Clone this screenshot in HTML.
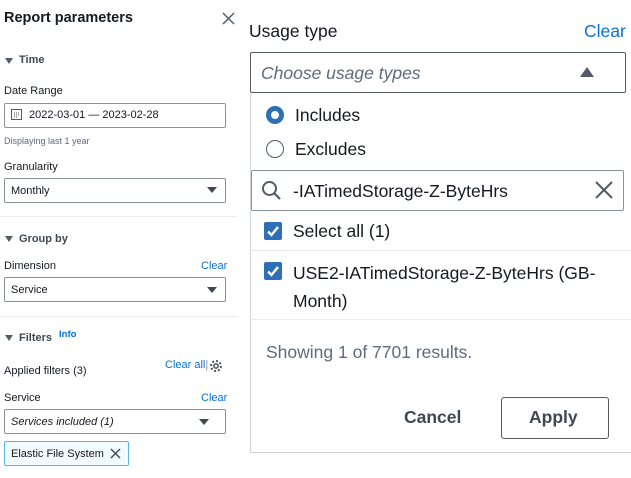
<!DOCTYPE html>
<html><head><style>
*{box-sizing:border-box;margin:0;padding:0}
body{width:631px;height:478px;overflow:hidden;background:#fff;font-family:"Liberation Sans",sans-serif;color:#16191f;position:relative}
.a{position:absolute;white-space:nowrap}
.s{font-size:11px}
.lbl{font-size:11px;color:#16191f}
.blue{color:#0972d3}
.box{position:absolute;border:1px solid #8d9199;border-radius:2px;background:#fff}
.tri{position:absolute;width:0;height:0;border-left:5px solid transparent;border-right:5px solid transparent;border-top:6px solid #414750}
.ttri{position:absolute;width:0;height:0;border-left:4px solid transparent;border-right:4px solid transparent;border-top:6px solid #545b64}
.hr{position:absolute;height:1px;background:#e9ebed}
.cb{position:absolute;width:18px;height:18px;background:#2f6fb6;border-radius:2px}
.R{font-size:17.5px}
</style></head><body>
<div class="a" style="left:4px;top:10px;font-size:14.5px;font-weight:bold">Report parameters</div>
<svg class="a" style="left:222px;top:12px" width="13" height="13"><path d="M1 1L12 12M12 1L1 12" stroke="#545b64" stroke-width="1.5"/></svg>

<div class="ttri" style="left:5px;top:58px"></div>
<div class="a s" style="left:19px;top:54px;font-weight:bold;color:#414750">Time</div>
<div class="a lbl" style="left:4px;top:85px">Date Range</div>
<div class="box" style="left:4px;top:103px;width:222px;height:25px"></div>
<svg class="a" style="left:11px;top:109px" width="11" height="11"><rect x=".5" y=".5" width="10" height="10" fill="none" stroke="#545b64"/><path d="M3 4h1M5 4h1M7 4h1M3 6h1M5 6h1M7 6h1M3 8h1M5 8h1" stroke="#545b64"/></svg>
<div class="a s" style="left:29px;top:109px">2022-03-01 — 2023-02-28</div>
<div class="a" style="left:4px;top:136px;font-size:9px;color:#5f6b7a">Displaying last 1 year</div>
<div class="a lbl" style="left:4px;top:161px">Granularity</div>
<div class="box" style="left:4px;top:178px;width:222px;height:25px"></div>
<div class="a s" style="left:11px;top:185px">Monthly</div>
<div class="tri" style="left:207px;top:187px"></div>
<div class="hr" style="left:0;top:216px;width:237px"></div>

<div class="ttri" style="left:5px;top:236px"></div>
<div class="a s" style="left:19px;top:233px;font-weight:bold;color:#414750">Group by</div>
<div class="a lbl" style="left:4px;top:260px">Dimension</div>
<div class="a s blue" style="left:201px;top:260px">Clear</div>
<div class="box" style="left:4px;top:277px;width:222px;height:25px"></div>
<div class="a s" style="left:11px;top:284px">Service</div>
<div class="tri" style="left:207px;top:287px"></div>
<div class="hr" style="left:0;top:316px;width:237px"></div>

<div class="ttri" style="left:5px;top:335px"></div>
<div class="a s" style="left:19px;top:332px;font-weight:bold;color:#414750">Filters</div>
<div class="a blue" style="left:59px;top:329px;font-size:9.5px;font-weight:bold">Info</div>
<div class="a lbl" style="left:4px;top:365px">Applied filters (3)</div>
<div class="a s blue" style="left:165px;top:359px">Clear all<span style="color:#8d9199">|</span></div>
<svg class="a" style="left:209px;top:359px" width="14" height="14"><circle cx="7" cy="7" r="2.2" fill="none" stroke="#414750" stroke-width="1.4"/><circle cx="7" cy="7" r="5" fill="none" stroke="#414750" stroke-width="1.8" stroke-dasharray="2 1.9"/></svg>
<div class="a lbl" style="left:4px;top:392px">Service</div>
<div class="a s blue" style="left:201px;top:392px">Clear</div>
<div class="box" style="left:4px;top:409px;width:222px;height:25px"></div>
<div class="a s" style="left:11px;top:416px;font-style:italic">Services included (1)</div>
<div class="tri" style="left:199px;top:419px"></div>
<div class="a" style="left:4px;top:441px;width:125px;height:25px;border:1px solid #58b5e8;background:#f1faff;border-radius:2px"></div>
<div class="a s" style="left:11px;top:448px">Elastic File System</div>
<svg class="a" style="left:110px;top:448px" width="11" height="11"><path d="M1 1L10 10M10 1L1 10" stroke="#414750" stroke-width="1.4"/></svg>

<div class="a R" style="left:249px;top:21px">Usage type</div>
<div class="a blue R" style="left:584px;top:21px">Clear</div>
<div class="box" style="left:250px;top:52px;width:376px;height:41px;border-color:#545b64"></div>
<div class="a R" style="left:261px;top:63px;font-style:italic;color:#5f6b7a">Choose usage types</div>
<div class="a" style="left:580px;top:67px;width:0;height:0;border-left:7px solid transparent;border-right:7px solid transparent;border-bottom:10px solid #545b64"></div>

<div class="a" style="left:250px;top:93px;width:390px;height:360px;border:1px solid #d1d5db;border-top:none"></div>
<div class="a" style="left:266px;top:106px;width:18px;height:18px;border-radius:50%;border:5px solid #2f6fb6"></div>
<div class="a R" style="left:295px;top:105px">Includes</div>
<div class="a" style="left:266px;top:140px;width:18px;height:18px;border-radius:50%;border:1.5px solid #545b64"></div>
<div class="a R" style="left:295px;top:139px">Excludes</div>
<div class="box" style="left:251px;top:170px;width:373px;height:41px;border-color:#8d9199"></div>
<svg class="a" style="left:261px;top:180px" width="21" height="21"><circle cx="8.5" cy="8.5" r="6.5" fill="none" stroke="#545b64" stroke-width="2"/><path d="M13.5 13.5L19 19" stroke="#545b64" stroke-width="2.2"/></svg>
<div class="a R" style="left:293px;top:181px">-IATimedStorage-Z-ByteHrs</div>
<svg class="a" style="left:595px;top:181px" width="18" height="18"><path d="M1 1L17 17M17 1L1 17" stroke="#545b64" stroke-width="2"/></svg>
<div class="cb" style="left:264px;top:222px"></div>
<svg class="a" style="left:264px;top:222px" width="18" height="18"><path d="M4 9.5L7.5 13L14 5" fill="none" stroke="#fff" stroke-width="2.4"/></svg>
<div class="a R" style="left:293px;top:221px">Select all (1)</div>
<div class="hr" style="left:251px;top:250px;width:380px"></div>
<div class="cb" style="left:264px;top:262px"></div>
<svg class="a" style="left:264px;top:262px" width="18" height="18"><path d="M4 9.5L7.5 13L14 5" fill="none" stroke="#fff" stroke-width="2.4"/></svg>
<div class="a R" style="left:293px;top:259px;line-height:28px">USE2-IATimedStorage-Z-ByteHrs (GB-<br>Month)</div>
<div class="hr" style="left:251px;top:319px;width:380px"></div>
<div class="a R" style="left:266px;top:342px;color:#5f6b7a">Showing 1 of 7701 results.</div>
<div class="a R" style="left:404px;top:407px;font-weight:bold;color:#414750">Cancel</div>
<div class="a" style="left:501px;top:397px;width:108px;height:42px;border:1.5px solid #545b64;border-radius:3px"></div>
<div class="a R" style="left:529px;top:407px;font-weight:bold;color:#414750">Apply</div>
</body></html>
